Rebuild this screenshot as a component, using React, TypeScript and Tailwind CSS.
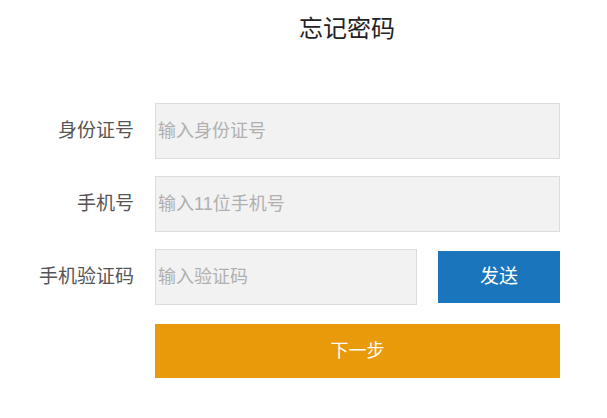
import React from 'react';

const font = { fontFamily: '"Liberation Sans", "Noto Sans CJK SC", sans-serif' };

interface RowProps {
  label: string;
  children: React.ReactNode;
}

const Row = ({ label, children }: RowProps) => {
  return (
    <div className="flex items-center">
      <label className="w-[134px] shrink-0 text-right text-[19px] text-[#555]">{label}</label>
      <div className="ml-[21px] flex w-[405px] items-center">{children}</div>
    </div>
  );
};

const Input = ({ placeholder, className }: { placeholder: string; className: string }) => {
  return (
    <input
      placeholder={placeholder}
      className={`${className} h-[56px] border border-[#dcdcdc] bg-[#f2f2f2] pl-[2px] text-[18px] text-[#333] outline-none placeholder:text-[#b0b0b0]`}
    />
  );
};

const App = () => {
  return (
    <div className="h-[418px] w-[607px] bg-white" style={font}>
      <h1 className="pl-[299px] pt-[15px] text-[24px] leading-[28px] text-[#222]">忘记密码</h1>
      <div className="mt-[60px] flex flex-col gap-[17px]">
        <Row label="身份证号">
          <Input placeholder="输入身份证号" className="w-full" />
        </Row>
        <Row label="手机号">
          <Input placeholder="输入11位手机号" className="w-full" />
        </Row>
        <Row label="手机验证码">
          <Input placeholder="输入验证码" className="w-[262px]" />
          <button className="ml-auto h-[52px] w-[122px] bg-[#1a75bd] text-[19px] text-white">
            发送
          </button>
        </Row>
      </div>
      <div className="ml-[155px] mt-[19px] w-[405px]">
        <button className="h-[54px] w-full bg-[#e99a0a] text-[18px] text-white">下一步</button>
      </div>
    </div>
  );
};

export default App;
